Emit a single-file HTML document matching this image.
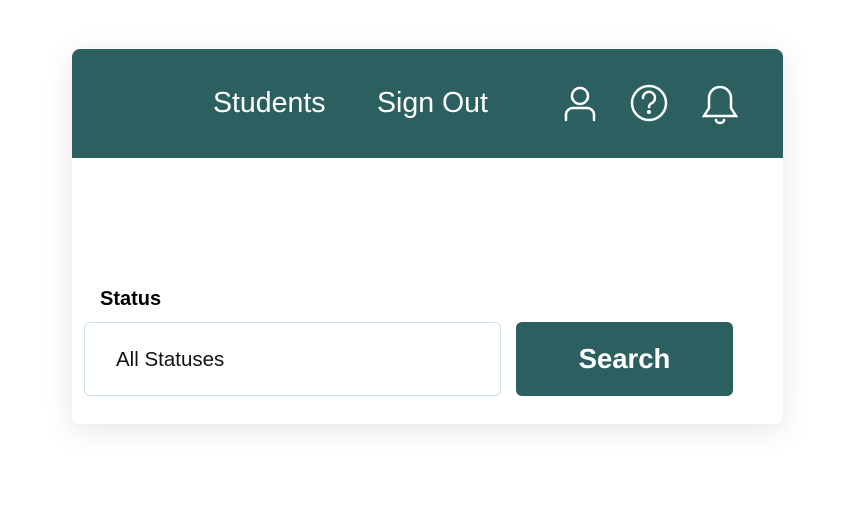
<!DOCTYPE html>
<html><head><style>
body{margin:0;width:855px;height:520px;background:#fff;font-family:"Liberation Sans",sans-serif;position:relative;overflow:hidden}
.card{position:absolute;left:72px;top:49px;width:711px;height:375px;background:#fff;border-radius:8px;box-shadow:0 6px 30px rgba(0,0,0,0.10);overflow:hidden}
.hdr{position:absolute;left:0;top:0;width:711px;height:109px;background:#2c5f5f}
.nav{position:absolute;top:38px;color:#fff;font-size:28.5px}
.lbl{position:absolute;left:28px;top:239px;font-size:20px;font-weight:bold;color:#000}
.inp{position:absolute;left:12px;top:273px;width:417px;height:74px;border:1.5px solid #cde4e6;border-radius:6px;box-sizing:border-box}
.inp span{position:absolute;left:31px;top:25px;font-size:20.5px;color:#111}
.btn{position:absolute;left:444px;top:273px;width:217px;height:74px;background:#2c5f5f;border-radius:6px;color:#fff;font-weight:bold;font-size:27.5px;text-align:center;line-height:74px}
</style></head><body>
<div class="card">
<div class="hdr">
<div class="nav" style="left:141px">Students</div>
<div class="nav" style="left:305px">Sign Out</div>
<svg style="position:absolute;left:480px;top:30px" width="200" height="50" viewBox="0 0 200 50" fill="none" stroke="#fff" stroke-width="2.5" stroke-linecap="round">
<circle cx="28" cy="17" r="8"/>
<path d="M14 41v-5a7 7 0 0 1 7-7h14a7 7 0 0 1 7 7v5"/>
<circle cx="97" cy="24" r="17"/>
<path d="M91 19a6 6 0 1 1 9 5c-2 1-3 2-3 4"/>
<circle cx="97" cy="33" r="0.8" fill="#fff"/>
<path d="M168 8a11 11 0 0 1 11 11v10l5 8h-32l5-8v-10a11 11 0 0 1 11-11z"/>
<path d="M164 41a4 3 0 0 0 8 0"/>
</svg>
</div>
<div class="lbl">Status</div>
<div class="inp"><span>All Statuses</span></div>
<div class="btn">Search</div>
</div>
</body></html>
